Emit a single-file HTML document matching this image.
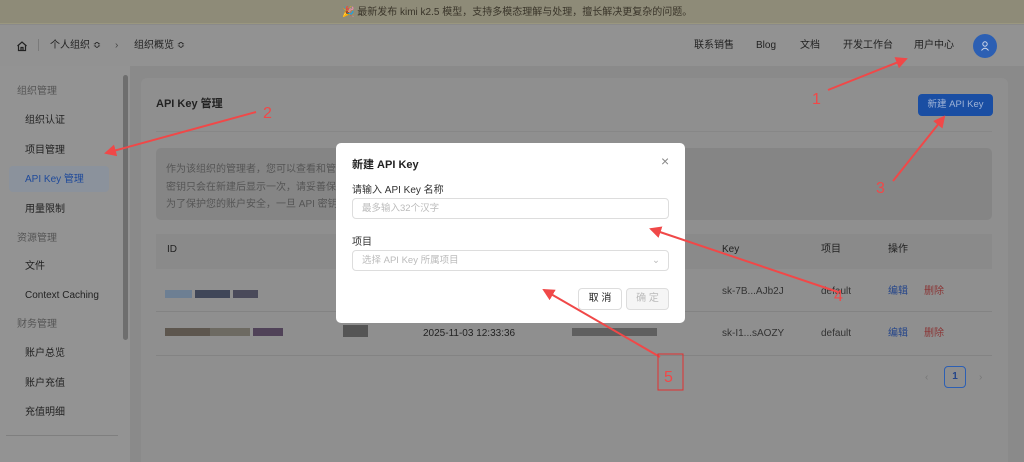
<!DOCTYPE html>
<html><head><meta charset="utf-8">
<style>
*{margin:0;padding:0;box-sizing:border-box}
html,body{width:1024px;height:462px;overflow:hidden}
body{position:relative;background:#8a8a8a;font-family:"Liberation Sans","Noto Sans CJK SC",sans-serif;color:#222;font-size:10px;line-height:15px}
.a{position:absolute;white-space:nowrap}
.banner{left:0;top:0;width:1024px;height:24px;background:#8e8b78;border-bottom:1px solid #9a977f}
.hdr{left:0;top:25px;width:1024px;height:41px;background:#929292}
.side{left:0;top:66px;width:130px;height:396px;background:#939393}
.card{left:141px;top:78px;width:867px;height:384px;background:#8f8f8f;border-radius:6px 6px 0 0}
.g{color:#555}
.pix span{display:inline-block;height:8px}
.modal{left:336px;top:143px;width:349px;height:180px;background:#fff;border-radius:5px}
.inp{border:1px solid #ddd;border-radius:4px;height:21px;color:#bbb;padding:2px 9px;font-size:9.5px}
</style></head><body>
<div class="a banner"></div>
<div class="a" style="left:342px;top:5px;font-size:10px;color:#3a352a">🎉 最新发布 kimi k2.5 模型，支持多模态理解与处理，擅长解决更复杂的问题。</div>
<div class="a hdr"></div>
<svg class="a" style="left:16px;top:40px" width="12" height="12" viewBox="0 0 12 12"><path d="M1.5 6 L6 2 L10.5 6 M2.5 5.2 V10.5 H9.5 V5.2 M5 10.5 V7.5 H7 V10.5" stroke="#222" fill="none" stroke-width="1.2"/></svg>
<div class="a" style="left:38px;top:39px;width:1px;height:12px;background:#7a7a7a"></div>
<div class="a" style="left:50px;top:38px;font-size:10px">个人组织 ≎</div>
<div class="a" style="left:115px;top:38px;font-size:10px;color:#444">›</div>
<div class="a" style="left:134px;top:38px;font-size:10px">组织概览 ≎</div>
<div class="a" style="left:694px;top:38px;font-size:10px">联系销售</div>
<div class="a" style="left:756px;top:38px;font-size:10px">Blog</div>
<div class="a" style="left:800px;top:38px;font-size:10px">文档</div>
<div class="a" style="left:843px;top:38px;font-size:10px">开发工作台</div>
<div class="a" style="left:914px;top:38px;font-size:10px">用户中心</div>
<div class="a" style="left:973px;top:34px;width:24px;height:24px;border-radius:50%;background:#2c5fb3"></div>
<svg class="a" style="left:979px;top:40px" width="12" height="12" viewBox="0 0 12 12"><circle cx="6" cy="4" r="2.2" stroke="#cfd8ea" fill="none"/><path d="M2.5 10.5 Q6 6 9.5 10.5" stroke="#cfd8ea" fill="none"/></svg>

<div class="a side"></div>
<div class="a" style="left:123px;top:75px;width:5px;height:265px;background:#6e6e6e;border-radius:3px"></div>
<div class="a g" style="left:17px;top:84px">组织管理</div>
<div class="a" style="left:25px;top:113px">组织认证</div>
<div class="a" style="left:25px;top:143px">项目管理</div>
<div class="a" style="left:9px;top:166px;width:100px;height:26px;background:#8b929c;border-radius:4px"></div>
<div class="a" style="left:25px;top:172px;color:#1f4a9a">API Key 管理</div>
<div class="a" style="left:25px;top:202px">用量限制</div>
<div class="a g" style="left:17px;top:231px">资源管理</div>
<div class="a" style="left:25px;top:259px">文件</div>
<div class="a" style="left:25px;top:288px">Context Caching</div>
<div class="a g" style="left:17px;top:317px">财务管理</div>
<div class="a" style="left:25px;top:346px">账户总览</div>
<div class="a" style="left:25px;top:376px">账户充值</div>
<div class="a" style="left:25px;top:405px">充值明细</div>
<div class="a" style="left:6px;top:435px;width:112px;height:1px;background:#7f7f7f"></div>

<div class="a card"></div>
<div class="a" style="left:156px;top:97px;font-size:11px;font-weight:bold">API Key 管理</div>
<div class="a" style="left:918px;top:94px;width:75px;height:22px;background:#1a4ea3;border-radius:4px;color:#9fb3d6;font-size:9.5px;text-align:center;line-height:22px">新建 API Key</div>
<div class="a" style="left:156px;top:131px;width:836px;height:1px;background:#878787"></div>
<div class="a" style="left:156px;top:148px;width:836px;height:72px;background:#858585;border-radius:5px"></div>
<div class="a g" style="left:166px;top:161px;line-height:17.5px">作为该组织的管理者，您可以查看和管理<br>密钥只会在新建后显示一次，请妥善保存<br>为了保护您的账户安全，一旦 API 密钥被</div>
<div class="a" style="left:156px;top:234px;width:836px;height:35px;background:#8a8a8a"></div>
<div class="a" style="left:167px;top:242px">ID</div>
<div class="a" style="left:722px;top:242px">Key</div>
<div class="a" style="left:821px;top:242px">项目</div>
<div class="a" style="left:888px;top:242px">操作</div>
<div class="a" style="left:156px;top:311px;width:836px;height:1px;background:#838383"></div>
<div class="a" style="left:156px;top:355px;width:836px;height:1px;background:#838383"></div>
<div class="a pix" style="left:165px;top:288px"><span style="width:27px;background:#6d7f93"></span> <span style="width:35px;background:#3f4658"></span> <span style="width:25px;background:#4a4a5a"></span></div>
<div class="a pix" style="left:165px;top:326px"><span style="width:45px;background:#5d564e"></span><span style="width:40px;background:#6d6a62"></span> <span style="width:30px;background:#504258"></span></div>
<div class="a" style="left:343px;top:325px;width:25px;height:12px;background:#555"></div>
<div class="a" style="left:423px;top:326px">2025-11-03 12:33:36</div>
<div class="a pix" style="left:572px;top:326px"><span style="width:85px;background:#5f5f5f"></span></div>
<div class="a" style="left:722px;top:284px;color:#333">sk-7B...AJb2J</div>
<div class="a" style="left:722px;top:326px;color:#333">sk-I1...sAOZY</div>
<div class="a" style="left:821px;top:284px;color:#333">default</div>
<div class="a" style="left:821px;top:326px;color:#333">default</div>
<div class="a" style="left:888px;top:284px;color:#24458a">编辑</div>
<div class="a" style="left:924px;top:284px;color:#8a3434">删除</div>
<div class="a" style="left:888px;top:326px;color:#24458a">编辑</div>
<div class="a" style="left:924px;top:326px;color:#8a3434">删除</div>
<div class="a" style="left:925px;top:370px;color:#777">‹</div>
<div class="a" style="left:944px;top:366px;width:22px;height:22px;border:1px solid #2c5fb3;border-radius:4px;color:#24458a;text-align:center;line-height:20px;font-weight:bold">1</div>
<div class="a" style="left:979px;top:370px;color:#777">›</div>

<div class="a modal"></div>
<div class="a" style="left:352px;top:158px;font-size:11px;font-weight:bold;color:#222">新建 API Key</div>
<div class="a" style="left:661px;top:153px;font-size:14px;line-height:16px;color:#888">×</div>
<div class="a" style="left:352px;top:183px;color:#333">请输入 API Key 名称</div>
<div class="a inp" style="left:352px;top:198px;width:317px">最多输入32个汉字</div>
<div class="a" style="left:352px;top:235px;color:#333">项目</div>
<div class="a inp" style="left:352px;top:250px;width:317px">选择 API Key 所属项目<span style="position:absolute;right:8px;top:2px;color:#bbb">⌄</span></div>
<div class="a" style="left:578px;top:288px;width:44px;height:22px;border:1px solid #ddd;border-radius:4px;text-align:center;line-height:20px;color:#222">取 消</div>
<div class="a" style="left:626px;top:288px;width:43px;height:22px;border:1px solid #ddd;background:#f5f5f5;border-radius:4px;text-align:center;line-height:20px;color:#bbb">确 定</div>

<svg class="a" style="left:0;top:0" width="1024" height="462">
<defs><marker id="h" markerWidth="6" markerHeight="6" refX="5" refY="3" orient="auto"><path d="M0 0 L6 3 L0 6 Z" fill="#f04848"/></marker></defs>
<g stroke="#f04848" stroke-width="2" fill="none" marker-end="url(#h)">
<line x1="828" y1="90" x2="906" y2="59"/>
<line x1="256" y1="112" x2="106" y2="153"/>
<line x1="893" y1="181" x2="944" y2="117"/>
<line x1="838" y1="292" x2="651" y2="229"/>
<line x1="660" y1="357" x2="544" y2="290"/>
</g>
<g fill="#f04848" font-family="Liberation Sans" font-size="16">
<text x="812" y="104">1</text><text x="263" y="118">2</text><text x="876" y="193">3</text><text x="834" y="301">4</text><text x="664" y="382">5</text>
</g>
<rect x="658" y="354" width="25" height="36" fill="none" stroke="#e03030" stroke-width="1"/>
</svg>
</body></html>
